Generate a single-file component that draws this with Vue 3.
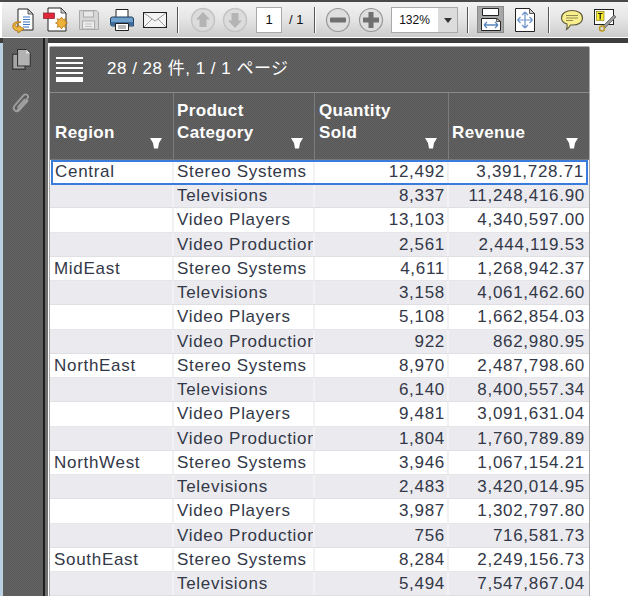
<script setup>
const rows = [
  ['Central', 'Stereo Systems', '12,492', '3,391,728.71'],
  ['', 'Televisions', '8,337', '11,248,416.90'],
  ['', 'Video Players', '13,103', '4,340,597.00'],
  ['', 'Video Production', '2,561', '2,444,119.53'],
  ['MidEast', 'Stereo Systems', '4,611', '1,268,942.37'],
  ['', 'Televisions', '3,158', '4,061,462.60'],
  ['', 'Video Players', '5,108', '1,662,854.03'],
  ['', 'Video Production', '922', '862,980.95'],
  ['NorthEast', 'Stereo Systems', '8,970', '2,487,798.60'],
  ['', 'Televisions', '6,140', '8,400,557.34'],
  ['', 'Video Players', '9,481', '3,091,631.04'],
  ['', 'Video Production', '1,804', '1,760,789.89'],
  ['NorthWest', 'Stereo Systems', '3,946', '1,067,154.21'],
  ['', 'Televisions', '2,483', '3,420,014.95'],
  ['', 'Video Players', '3,987', '1,302,797.80'],
  ['', 'Video Production', '756', '716,581.73'],
  ['SouthEast', 'Stereo Systems', '8,284', '2,249,156.73'],
  ['', 'Televisions', '5,494', '7,547,867.04'],
]
const headers = [
  { lines: ['Region'], cls: 'h1' },
  { lines: ['Product', 'Category'], cls: 'h2' },
  { lines: ['Quantity', 'Sold'], cls: 'h3' },
  { lines: ['Revenue'], cls: 'h4' },
]
</script>

<template>
  <div class="app">
    <header class="toolbar">
      <div class="tool">
        <svg width="28" height="28" viewBox="0 0 28 28">
          <path d="M9 3h10l5 5v16H9z" fill="#fff" stroke="#222" />
          <path d="M19 3v5h5z" fill="#ccc" stroke="#222" stroke-width=".7" />
          <path d="M14 11h7M14 13.5h7M14 16h7M14 18.500h7M14 21h6" stroke="#3f77c4" stroke-width="1.200" />
          <path d="M12 16c-6-1-9 1-8 6 1 2 3 3 5 3v2l6-4-6-4v2c-2 0-3-1-3-2 0-1 3-2 6-3z" fill="#eeb43c" stroke="#a66f12" stroke-width=".8" />
        </svg>
      </div>
      <div class="tool">
        <svg width="28" height="28" viewBox="0 0 28 28">
          <path d="M6 2h13l5 5v18H6z" fill="#fff" stroke="#222" />
          <path d="M19 2v5h5z" fill="#ccc" stroke="#222" stroke-width=".7" />
          <rect x="1.500" y="7" width="11" height="5.500" fill="#e3273a" stroke="#80202a" stroke-width=".7" />
          <path d="M19.500 11l1.500 2.500 2.800-.8-.8 2.800 2.500 1.500-2.500 1.500.8 2.800-2.800-.8-1.500 2.500-1.500-2.500-2.800.8.800-2.800-2.500-1.500 2.500-1.500-.8-2.800 2.800.8z" fill="#eeb139" stroke="#a66f12" stroke-width=".7" />
        </svg>
      </div>
      <div class="tool">
        <svg width="24" height="24" viewBox="0 0 24 24">
          <path d="M2.500 2.500h17l2 2v17h-19z" fill="#d6d6d6" stroke="#a8a8a8" />
          <rect x="6.500" y="3" width="10" height="6" fill="#e8e8e8" stroke="#aaa" />
          <rect x="5.500" y="13" width="12" height="8" fill="#ececec" stroke="#aaa" />
          <path d="M8 16h7M8 18.500h7" stroke="#c0c0c0" />
        </svg>
      </div>
      <div class="tool">
        <svg width="26" height="26" viewBox="0 0 26 26">
          <path d="M7 2.500h12v8H7z" fill="#fff" stroke="#222" />
          <path d="M3.500 10h19a2 2 0 0 1 2 2v7h-21a2 2 0 0 1-2-2v-5a2 2 0 0 1 2-2z" fill="#6f9fcb" stroke="#1d3c5a" />
          <path d="M1.500 15h23v3h-23z" fill="#3d6c9c" />
          <path d="M6.500 16.500h13v7h-13z" fill="#fff" stroke="#222" />
          <path d="M9 19h8M9 21h8" stroke="#777" />
        </svg>
      </div>
      <div class="tool">
        <svg width="26" height="18" viewBox="0 0 26 18">
          <rect x="1.500" y="1.500" width="23" height="15" fill="#f4f4f4" stroke="#222" />
          <path d="M2 2l11 8 11-8M2 16l8-8M24 16l-8-8" fill="none" stroke="#999" />
        </svg>
      </div>
      <span class="sep sep-a"></span>
      <div class="tool nav nav-first">
        <svg width="26" height="26" viewBox="0 0 26 26">
          <circle cx="13" cy="13" r="11.500" fill="#dcdcdc" stroke="#c4c4c4" stroke-width="1.500" />
          <path d="M13 5l7 7.500h-3.500V20h-7v-7.500H6z" fill="#b4b4b4" />
        </svg>
      </div>
      <div class="tool nav">
        <svg width="26" height="26" viewBox="0 0 26 26">
          <circle cx="13" cy="13" r="11.500" fill="#dcdcdc" stroke="#c4c4c4" stroke-width="1.500" />
          <path d="M13 21l7-7.500h-3.500V6h-7v7.500H6z" fill="#b4b4b4" />
        </svg>
      </div>
      <div class="page-input">1</div>
      <span class="page-total">/ 1</span>
      <span class="sep sep-b"></span>
      <div class="tool zoom-tool zoom-first">
        <svg width="26" height="26" viewBox="0 0 26 26">
          <circle cx="13" cy="13" r="11.500" fill="#dedede" stroke="#979797" stroke-width="1.200" />
          <rect x="5" y="10.500" width="16" height="5" rx="1" fill="#707070" />
        </svg>
      </div>
      <div class="tool zoom-tool">
        <svg width="26" height="26" viewBox="0 0 26 26">
          <circle cx="13" cy="13" r="11.500" fill="#dedede" stroke="#979797" stroke-width="1.200" />
          <path d="M10.500 5h5v5.500H21v5h-5.500V21h-5v-5.500H5v-5h5.500z" fill="#707070" />
        </svg>
      </div>
      <div class="zoom-box">
        <span class="zoom-value">132%</span>
        <span class="zoom-arrow"></span>
      </div>
      <span class="sep sep-c"></span>
      <div class="pressed">
        <svg width="22" height="24" viewBox="0 0 22 24">
          <path d="M2.500.5h16v7h-16z" fill="#fff" stroke="#222" />
          <path d="M1.500 10.500h15l4 3v9h-19z" fill="#fff" stroke="#222" />
          <path d="M16.500 10.500v3h4z" fill="#ccc" stroke="#222" stroke-width=".7" />
          <path d="M4 17h14M4 17l3-3M4 17l3 3M18 17l-3-3M18 17l-3 3" fill="none" stroke="#5a86c0" stroke-width="1.300" />
        </svg>
      </div>
      <div class="tool fit-page">
        <svg width="22" height="26" viewBox="0 0 22 26">
          <path d="M1.500 1.500h14l5 5v18h-19z" fill="#fff" stroke="#222" />
          <path d="M15.500 1.500v5h5z" fill="#ccc" stroke="#222" stroke-width=".7" />
          <path d="M11 5v16M3.500 13h15M11 5l-3 3M11 5l3 3M11 21l-3-3M11 21l3-3M3.500 13l3-3M3.500 13l3 3M18.500 13l-3-3M18.500 13l-3 3" fill="none" stroke="#6c95cc" stroke-width="1.200" />
        </svg>
      </div>
      <span class="sep sep-d"></span>
      <div class="tool comment-tool">
        <svg width="24" height="22" viewBox="0 0 24 22">
          <path d="M12 1.500c6 0 10.500 3 10.500 7.500S18 16 13 16c-1 0-2 0-2.500 0-.8 1.500-2 3.500-4 4.500.5-1.500.8-3.500.5-5.500C3.500 14 1.500 12 1.500 9 1.500 4.500 6 1.500 12 1.500z" fill="#f9ee8e" stroke="#5d5a3a" stroke-width="1.100" />
          <path d="M6 6.500h12M6 9h12M6 11.500h7" stroke="#8f8a50" stroke-width="1" />
        </svg>
      </div>
      <div class="tool">
        <svg width="24" height="24" viewBox="0 0 24 24">
          <rect x="1.500" y="1.500" width="19" height="15" fill="#fff" stroke="#222" />
          <rect x="3.500" y="3.500" width="7.500" height="9" fill="#f8ec2e" stroke="#8b8420" stroke-width=".7" />
          <path d="M5 5.500h4.500M7.200 5.500v6" stroke="#222" stroke-width="1.200" />
          <path d="M21 7l2 2-11 11-2-2z" fill="#999" stroke="#555" stroke-width=".7" />
          <circle cx="9" cy="20.500" r="2.500" fill="none" stroke="#b99a1e" stroke-width="1.400" />
        </svg>
      </div>
    </header>

    <div class="strip"></div>

    <main class="workspace">
      <aside class="sidebar">
        <svg class="side-icon" width="21" height="23" viewBox="0 0 24 26">
          <path d="M2 7h14v17H2z" fill="#a6a6a6" stroke="#2f2f2f" stroke-width="1.200" />
          <path d="M7.500 1.500h10l4.500 4.500v14.500H7.500z" fill="#b2b2b2" stroke="#2f2f2f" stroke-width="1.200" />
          <path d="M17.500 1.500V6H22z" fill="#e4e4e4" />
        </svg>
        <svg class="side-icon clip" width="21" height="23" viewBox="0 0 24 26">
          <path d="M7 21 19 7c2-3-2-6-4.500-3.500L4 15.500c-3 4 2 8.500 5.500 5L19 10" fill="none" stroke="#a0a0a0" stroke-width="2" stroke-linecap="round" />
          <path d="M8 17 15.500 8.500" fill="none" stroke="#a0a0a0" stroke-width="2" stroke-linecap="round" />
        </svg>
      </aside>
      <div class="gutter"></div>
      <section class="page">
        <div class="report">
          <div class="titlebar">
            <div class="menu-icon">
              <span></span><span></span><span></span><span></span><span class="thick"></span>
            </div>
            <span class="title-text">28 / 28 件, 1 / 1 ページ</span>
          </div>
          <div class="grid head">
            <div v-for="h in headers" :key="h.cls" class="hcell" :class="h.cls">
              <span v-for="l in h.lines" :key="l" class="hline">{{ l }}</span>
              <svg class="sort" width="12" height="11" viewBox="0 0 12 11"><path d="M0 0h12L9 5 8 10.500H4L3 5z" fill="#fff" /></svg>
            </div>
          </div>
          <div class="body">
            <div v-for="(r, i) in rows" :key="i" class="grid row" :class="{ alt: i % 2 === 1, selected: i === 0 }">
              <div class="cell">{{ r[0] }}</div>
              <div class="cell">{{ r[1] }}</div>
              <div class="cell num">{{ r[2] }}</div>
              <div class="cell num">{{ r[3] }}</div>
            </div>
          </div>
        </div>
      </section>
    </main>
  </div>
</template>

<style scoped>
.app {
  width: 628px;
  height: 596px;
  overflow: hidden;
  display: flex;
  flex-direction: column;
  background: #fff;
  font-family: "Liberation Sans", Arial, sans-serif;
}
.toolbar {
  flex: none;
  box-sizing: border-box;
  height: 38px;
  display: flex;
  align-items: center;
  padding-left: 6px;
  border-top: 2px solid #4a4a4a;
  border-bottom: 1px solid #fff;
  box-shadow: inset 2px 0 0 #fff;
  background: linear-gradient(#f2f2f2, #e6e6e6 45%, #cccccc);
  color: #111;
}
.tool {
  flex: none;
  width: 33px;
  height: 30px;
  display: flex;
  align-items: center;
  justify-content: center;
}
.sep { flex: none; width: 1px; height: 26px; background: #555; box-shadow: 1px 0 0 #fff; }
.sep-a { margin-left: 6px; }
.nav { width: 32px; }
.nav-first { margin-left: 9px; }
.page-input {
  flex: none;
  box-sizing: border-box;
  width: 26px;
  height: 26px;
  margin-left: 5px;
  background: #fff;
  border: 1px solid #aaa;
  font-size: 13px;
  line-height: 24px;
  text-align: center;
}
.page-total { flex: none; width: 15px; margin-left: 7px; font-size: 13px; white-space: nowrap; }
.sep-b { margin-left: 10px; }
.zoom-first { margin-left: 6px; }
.zoom-box {
  flex: none;
  box-sizing: border-box;
  width: 67px;
  height: 26px;
  margin-left: 4px;
  display: flex;
  background: #fff;
  border: 1px solid #aaa;
}
.zoom-value { width: 45px; font-size: 12px; line-height: 24px; text-align: center; }
.zoom-arrow {
  flex: 1;
  background: #dcdcdc;
  border-left: 1px solid #fff;
  position: relative;
}
.zoom-arrow::after {
  content: "";
  position: absolute;
  left: 6px;
  top: 10px;
  border: 4px solid transparent;
  border-top: 5px solid #333;
  border-bottom: 0;
}
.sep-c { margin-left: 9px; }
.pressed {
  flex: none;
  box-sizing: border-box;
  width: 27px;
  height: 27px;
  margin-left: 9px;
  background: #a6a6a6;
  border: 1px solid #8a8a8a;
  display: flex;
  align-items: center;
  justify-content: center;
}
.fit-page { width: 27px; margin-left: 7px; }
.sep-d { margin-left: 10px; }
.comment-tool { margin-left: 6px; }

.strip {
  flex: none;
  height: 5px;
  background: #3e3e3e;
}
.workspace {
  flex: 1;
  min-height: 0;
  display: flex;
  background: #bcd0e4;
}
.sidebar {
  flex: none;
  box-sizing: border-box;
  width: 40px;
  margin-left: 3px;
  margin-top: -5px;
  padding: 10px 4px 0 0;
  display: flex;
  flex-direction: column;
  align-items: center;
  gap: 21px;
  background: repeating-conic-gradient(#5a5a5a 0 25%, #646464 0 50%) 0 0 / 2px 2px;
}
.side-icon { display: block; }
.gutter {
  flex: none;
  width: 5px;
  background: linear-gradient(90deg, #1e1e1e 0 2px, #6e6e6e 2px);
  margin-top: -5px;
}
.page {
  flex: 1;
  min-width: 0;
  box-sizing: border-box;
  padding: 4px 0 0 2px;
  background: #fff;
}
.report {
  width: 539px;
  background: #fff;
  box-shadow: 0 -1px 0 #aaa, -1px 0 0 #aaa, 1px 0 0 #aaa;
}
.titlebar,
.head {
  background: repeating-conic-gradient(#595959 0 25%, #616161 0 50%) 0 0 / 2px 2px;
}
.titlebar {
  box-sizing: border-box;
  height: 46px;
  display: flex;
  align-items: center;
  padding-left: 6px;
  border-bottom: 1px solid #8a8a8a;
  color: #fff;
}
.menu-icon {
  width: 27px;
  display: flex;
  flex-direction: column;
  gap: 3px;
}
.menu-icon span { display: block; height: 2px; background: #fff; }
.menu-icon .thick { height: 5px; }
.title-text {
  margin: 0 0 6px 24px;
  font-family: "Liberation Sans", "Noto Sans CJK JP", sans-serif;
  font-size: 17px;
  letter-spacing: 0.5px;
  color: #fff;
}
.grid {
  display: grid;
  grid-template-columns: 124px 141px 134px 1fr;
}
.head {
  height: 67px;
  box-sizing: border-box;
  border-bottom: 1px solid #777;
}
.hcell {
  position: relative;
  display: flex;
  flex-direction: column;
  justify-content: flex-end;
  padding: 0 0 15px 5px;
  border-right: 1px solid #7c7c7c;
  color: #fff;
  font-size: 17px;
  font-weight: 700;
  letter-spacing: 0.35px;
  line-height: 22px;
}
.hcell.h2 { padding-left: 3px; }
.hcell.h3 { padding-left: 4px; }
.hcell:last-child { border-right: 0; padding-left: 3px; }
.hline { display: block; }
.sort { position: absolute; right: 11px; bottom: 10px; }
.body { height: 440px; overflow: hidden; }
.row {
  box-sizing: border-box;
  height: 24.235px;
  background: #fff;
  color: #333848;
  font-size: 17px;
  letter-spacing: 0.7px;
  border-bottom: 1px solid #e6e6ea;
}
.row.alt {
  background: repeating-conic-gradient(#e7e7ec 0 25%, #eeeef2 0 50%) 0 0 / 2px 2px;
  border-bottom-color: #e0e0e4;
}
.row.selected {
  position: relative;
  outline: 2px solid #3a7bdc;
  outline-offset: -2px;
  margin: 0 1px;
  height: 25px;
  margin-bottom: -0.765px;
  grid-template-columns: 123px 141px 134px 1fr;
}
.cell {
  box-sizing: border-box;
  padding: 1px 0 0 4px;
  line-height: 22px;
  white-space: nowrap;
  overflow: hidden;
  border-right: 2px solid #f2f2f4;
}
.row .cell:nth-child(2) { padding-left: 3px; }
.cell:last-child { border-right: 0; }
.num { text-align: right; padding: 1px 2px 0 0; }
.num:last-child { padding-right: 4px; }
</style>

<style>
html, body { margin: 0; background: #fff; }
</style>
